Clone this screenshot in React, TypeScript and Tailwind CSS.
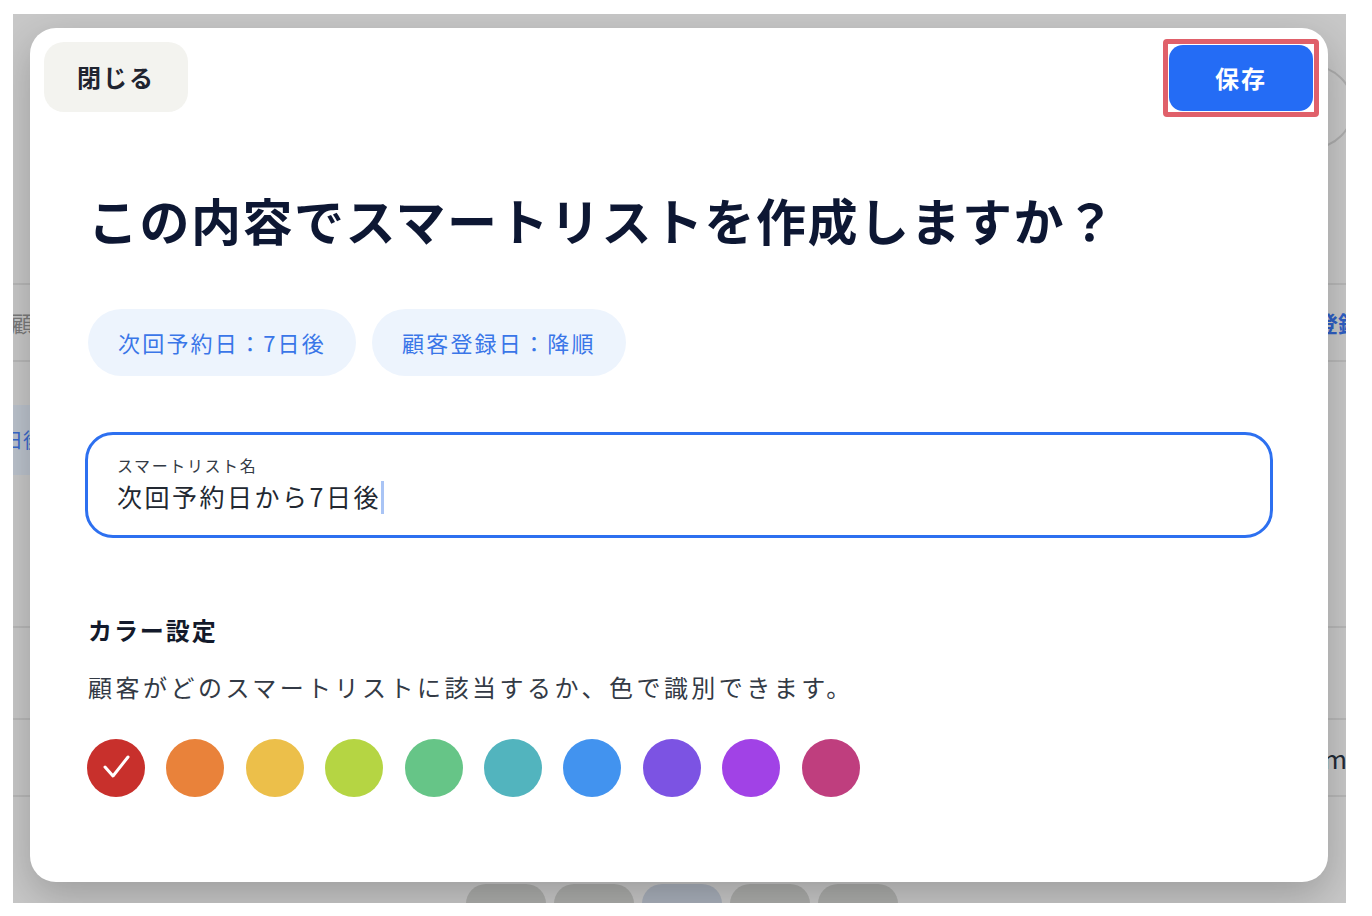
import React, { useState } from "react";

const colors = [
  "#c8302c",
  "#e9823a",
  "#ecbf4a",
  "#b5d543",
  "#66c587",
  "#52b4be",
  "#4293ef",
  "#7c53e3",
  "#a142e6",
  "#bf3e7e",
];

const font = { fontFamily: '"Noto Sans CJK JP", "Noto Sans", sans-serif' };

function BackgroundPage() {
  return (
    <div className="h-full flex flex-col text-[22px]">
      <div className="h-[269px] shrink-0 flex justify-end items-start">
        <div className="mt-[51px] -mr-[8px] w-[84px] h-[84px] rounded-full border-2 border-[#adadad]" />
      </div>
      <div className="h-[77px] shrink-0 border-t-2 border-[#b8b8b8] flex items-center justify-between">
        <span className="-ml-[2px] text-[#7a7a7a]">顧客名</span>
        <span className="-mr-[14px] font-bold text-[#2f5fc4]">新規登録</span>
      </div>
      <div className="h-[266px] shrink-0 border-t-2 border-[#b8b8b8] pt-[43px]">
        <div className="w-[60px] h-[70px] bg-[#bcc3cd] flex items-center -ml-[2px]">
          <span className="-ml-[8px] text-[20px] text-[#3868cc]">日後</span>
        </div>
      </div>
      <div className="h-[92px] shrink-0 border-t-2 border-[#b8b8b8]" />
      <div className="h-[77px] shrink-0 border-t-2 border-[#b8b8b8] flex items-center justify-end">
        <span className="-mr-[1px] text-[#222a36] text-[26px]">info@example.com</span>
      </div>
      <div className="shrink-0 border-t-2 border-[#b8b8b8] pt-[87px] pl-[453px] flex gap-[8px]">
        {["#acadab", "#acadab", "#a9b0bb", "#acadab", "#acadab"].map((c, i) => (
          <div key={i} className="w-[80px] h-[40px] rounded-full" style={{ backgroundColor: c }} />
        ))}
      </div>
    </div>
  );
}

export default function App() {
  const [selected, setSelected] = useState(0);
  const [name, setName] = useState("次回予約日から7日後");

  return (
    <div className="w-[1372px] h-[916px] bg-white pt-[14px] pl-[13px]" style={font}>
      <div className="relative w-[1333px] h-[889px] bg-[#c8c8c8] overflow-hidden">
        <BackgroundPage />

        <div className="absolute left-[17px] top-[14px] w-[1298px] h-[854px] bg-white rounded-[26px] shadow-[0_14px_40px_rgba(0,0,0,0.22)]">
          <div className="flex justify-between items-start pl-[14px] pr-[9px] pt-[11px]">
            <button className="mt-[3px] w-[144px] h-[70px] rounded-[20px] bg-[#f3f3ef] text-[24px] font-bold text-[#1f2430] tracking-[0.08em]">
              閉じる
            </button>
            <div className="border-[5px] border-[#e0606a] rounded-[4px] p-[1px] bg-white">
              <button className="w-[144px] h-[66px] rounded-[14px] bg-[#246cf5] text-white text-[24px] font-bold tracking-[0.08em]">
                保存
              </button>
            </div>
          </div>

          <div className="pl-[58px] pr-[55px]">
            <h1 className="mt-[66px] text-[50px] leading-[72px] font-bold text-[#0d1733] tracking-[0.03em]">
              この内容でスマートリストを作成しますか？
            </h1>

            <div className="mt-[54px] flex gap-[16px]">
              {["次回予約日：7日後", "顧客登録日：降順"].map((t) => (
                <span
                  key={t}
                  className="h-[67px] px-[30px] flex items-center rounded-full bg-[#edf4fd] text-[22px] text-[#3a76e8] tracking-[0.1em]"
                >
                  {t}
                </span>
              ))}
            </div>

            <label className="mt-[56px] -ml-[3px] w-[1188px] h-[106px] border-[3px] border-[#2d70f0] rounded-[28px] px-[29px] pt-[19px] flex flex-col">
              <span className="text-[16px] leading-[22px] text-[#333a45] tracking-[0.1em]">スマートリスト名</span>
              <div className="flex items-center h-[42px]">
                <span className="text-[25px] text-[#222831] tracking-[0.1em] whitespace-pre">{name}</span>
                <span className="w-[3px] h-[33px] bg-[#a9c4f5]" />
                <input
                  value={name}
                  onChange={(e) => setName(e.target.value)}
                  className="sr-only"
                  aria-label="スマートリスト名"
                />
              </div>
            </label>

            <h2 className="mt-[74px] text-[24px] leading-[36px] font-bold text-[#131a2b] tracking-[0.08em]">カラー設定</h2>
            <p className="mt-[21px] text-[24px] leading-[36px] text-[#333a45] tracking-[0.145em]">
              顧客がどのスマートリストに該当するか、色で識別できます。
            </p>

            <div className="mt-[34px] -ml-[1px] flex gap-[21.4px]">
              {colors.map((c, i) => (
                <button
                  key={c}
                  onClick={() => setSelected(i)}
                  className="w-[58px] h-[58px] rounded-full flex items-center justify-center"
                  style={{ backgroundColor: c }}
                >
                  {selected === i && (
                    <svg width="30" height="30" viewBox="0 0 30 30" fill="none">
                      <polyline
                        points="4,14 12,23 27,4"
                        stroke="white"
                        strokeWidth="3"
                        strokeLinecap="round"
                        strokeLinejoin="round"
                      />
                    </svg>
                  )}
                </button>
              ))}
            </div>
          </div>
        </div>
      </div>
    </div>
  );
}
